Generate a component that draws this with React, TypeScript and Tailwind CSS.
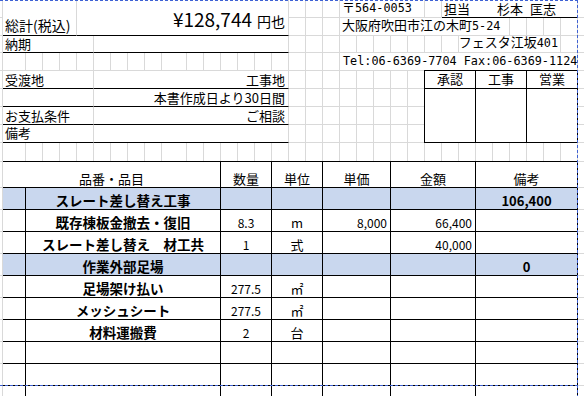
import React from 'react';

type Row = {
  band?: boolean;
  name?: string;
  qty?: string;
  unit?: string;
  price?: string;
  amount?: string;
  note?: string;
};

const rows: Row[] = [
  { band: true, name: 'スレート差し替え工事', note: '106,400' },
  { name: '既存棟板金撤去・復旧', qty: '8.3', unit: 'm', price: '8,000', amount: '66,400' },
  { name: 'スレート差し替え　材工共', qty: '1', unit: '式', amount: '40,000' },
  { band: true, name: '作業外部足場', note: '0' },
  { name: '足場架け払い', qty: '277.5', unit: '㎡' },
  { name: 'メッシュシート', qty: '277.5', unit: '㎡' },
  { name: '材料運搬費', qty: '2', unit: '台' },
  {},
  {},
  {},
];

const GC = 'h-full w-[17px] shrink-0 border-r border-b border-[#d9d9d9]';
const GCL = 'h-full w-[17px] shrink-0 border-r border-[#d9d9d9]';
const MONO = "font-['DejaVu_Sans_Mono',monospace] text-[11.8px]";

function Cells({ n, last = false }: { n: number; last?: boolean }) {
  return (
    <>
      {Array.from({ length: n }, (_, i) => (
        <div key={i} className={last ? GCL : GC} />
      ))}
    </>
  );
}

function Edge({ last = false }: { last?: boolean }) {
  return <div className={last ? 'h-full w-[6px] shrink-0' : 'h-full w-[6px] shrink-0 border-b border-[#d9d9d9]'} />;
}

function LeftGridRow({ last = false }: { last?: boolean }) {
  return (
    <div className="flex h-[18px]">
      <div className={last ? 'h-full w-[23px] shrink-0 border-r border-[#d9d9d9]' : 'h-full w-[23px] shrink-0 border-r border-b border-[#d9d9d9]'} />
      <Cells n={8} last={last} />
      <div className={last ? 'h-full w-[25px] shrink-0 border-r border-[#d9d9d9]' : 'h-full w-[25px] shrink-0 border-r border-b border-[#d9d9d9]'} />
      <Cells n={6} last={last} />
    </div>
  );
}

function LabelRow({ label, value, pb }: { label?: string; value?: string; pb?: boolean }) {
  return (
    <div className="flex h-[18px]">
      <div
        className={
          pb
            ? 'flex w-[91px] shrink-0 items-end border-r border-b border-r-[#d9d9d9] border-b-black pb-[3px] pl-[2px]'
            : 'flex w-[91px] shrink-0 items-end border-r border-b border-r-[#d9d9d9] border-b-black pb-[2px] pl-[2px]'
        }
      >
        <span className="text-[13px] leading-[13px]">{label}</span>
      </div>
      <div className="flex w-[195px] shrink-0 items-end justify-end border-r border-b border-r-[#d9d9d9] border-b-black pb-[2px] pr-[3px]">
        <span className="whitespace-nowrap text-[13px] leading-[13px]">{value}</span>
      </div>
    </div>
  );
}

function StubCol() {
  const h18 = 'h-[18px] w-[3px] border-r border-b border-[#d9d9d9]';
  const h17 = 'h-[17px] w-[3px] border-r border-b border-[#d9d9d9]';
  const hl = 'h-[18px] w-[3px] border-r border-[#d9d9d9]';
  return (
    <div className="flex w-[3px] shrink-0 flex-col">
      <div className={h18} />
      <div className={h18} />
      <div className={h17} />
      <div className={h18} />
      <div className={h18} />
      <div className={h18} />
      <div className={h18} />
      <div className={h18} />
      <div className={hl} />
    </div>
  );
}

function TableSide({ w6 = false }: { w6?: boolean }) {
  const head = w6
    ? 'h-[27px] w-[6px] border-t border-b border-[#d9d9d9]'
    : 'h-[27px] w-[3px] border-t border-r border-b border-[#d9d9d9]';
  const r = w6 ? 'h-[22px] w-[6px] border-b border-[#d9d9d9]' : 'h-[22px] w-[3px] border-r border-b border-[#d9d9d9]';
  return (
    <div className={w6 ? 'flex w-[6px] shrink-0 flex-col' : 'flex w-[3px] shrink-0 flex-col'}>
      <div className={head} />
      {rows.map((_, i) => (
        <div key={i} className={r} />
      ))}
    </div>
  );
}

export default function App() {
  return (
    <div className="relative h-[396px] w-[584px] overflow-hidden bg-white font-['Noto_Sans_CJK_JP',sans-serif] text-black">
      {/* top section */}
      <div className="flex h-[161px]">
        <StubCol />
        {/* left block */}
        <div className="flex w-[286px] shrink-0 flex-col">
          <div className="flex h-[36px]">
            <div className="flex w-[74px] shrink-0 items-end border-r border-b border-r-[#d9d9d9] border-b-black pb-[3px] pl-[2px]">
              <span className="whitespace-nowrap text-[14px] leading-[14px]">総計(税込)</span>
            </div>
            <div className="flex w-[212px] shrink-0 items-end justify-end border-r border-b border-r-[#d9d9d9] border-b-black pb-[4px] pr-[3px]">
              <div className="whitespace-nowrap text-[19px] leading-[19px]">
                <span>¥128,744</span>
                <span className="ml-[5px] text-[14px]">円也</span>
              </div>
            </div>
          </div>
          <div className="flex h-[17px]">
            <div className="flex w-[91px] shrink-0 items-end border-r border-b border-r-[#d9d9d9] border-b-black pb-[2px] pl-[2px]">
              <span className="text-[13px] leading-[13px]">納期</span>
            </div>
            <div className="w-[195px] shrink-0 border-r border-b border-r-[#d9d9d9] border-b-black" />
          </div>
          <LeftGridRow />
          <LabelRow label="受渡地" value="工事地" />
          <LabelRow value="本書作成日より30日間" />
          <LabelRow label="お支払条件" value="ご相談" />
          <LabelRow label="備考" pb />
          <LeftGridRow last />
        </div>

        {/* right block */}
        <div className="flex w-[295px] shrink-0 flex-col">
          {/* R1 */}
          <div className="flex h-[18px]">
            <Cells n={3} />
            <div className="flex w-[85px] shrink-0 items-end border-r border-b border-[#d9d9d9] pb-[2px] pl-[2px]">
              <span className="whitespace-nowrap text-[13px] leading-[13px]">
                〒<span className={MONO}>564-0053</span>
              </span>
            </div>
            <Cells n={1} />
            <div className="flex w-[34px] shrink-0 items-end border-b border-black pb-[2px] pl-[2px]">
              <span className="whitespace-nowrap text-[13px] leading-[13px]">担当</span>
            </div>
            <div className="flex w-[102px] shrink-0 items-end justify-center border-r border-b border-r-[#d9d9d9] border-b-black pb-[2px]">
              <span className="whitespace-nowrap text-[13px] leading-[13px]">
                杉本<span className="ml-[7px]">匡志</span>
              </span>
            </div>
            <Edge />
          </div>
          {/* R2 */}
          <div className="flex h-[18px]">
            <Cells n={3} />
            <div className="flex w-[170px] shrink-0 items-end border-r border-b border-[#d9d9d9] pb-[2px] pl-[2px]">
              <span className="whitespace-nowrap text-[13px] leading-[13px]">
                大阪府吹田市江の木町<span className={MONO}>5-24</span>
              </span>
            </div>
            <Cells n={4} />
            <Edge />
          </div>
          {/* R3 */}
          <div className="flex h-[17px]">
            <Cells n={10} />
            <div className="flex w-[102px] shrink-0 items-end justify-end border-r border-b border-[#d9d9d9] pb-[2px] pr-[2px]">
              <span className="whitespace-nowrap text-[13px] leading-[13px]">
                フェスタ江坂<span className={MONO}>401</span>
              </span>
            </div>
            <Cells n={1} />
            <Edge />
          </div>
          {/* R4 */}
          <div className="flex h-[18px]">
            <Cells n={3} />
            <div className="flex w-[238px] shrink-0 items-end border-r border-b border-[#d9d9d9] pb-[2px] pl-[3px]">
              <span className={'whitespace-nowrap leading-[13px] ' + MONO}>Tel:06-6369-7704 Fax:06-6369-1124</span>
            </div>
            <Edge />
          </div>
          {/* R5-R8 with approval box */}
          <div className="flex h-[72px] items-start">
            <div className="flex w-[135px] shrink-0 flex-col">
              {[0, 1, 2, 3].map((i) => (
                <div key={i} className="flex h-[18px]">
                  <Cells n={7} />
                  <div className="h-full w-[16px] shrink-0 border-b border-[#d9d9d9]" />
                </div>
              ))}
            </div>
            <div className="-mt-px flex h-[73px] w-[154px] shrink-0 flex-col border-t border-l border-black">
              <div className="flex h-[18px]">
                {['承認', '工事', '営業'].map((t) => (
                  <div key={t} className="flex w-[51px] shrink-0 items-end justify-center border-r border-b border-black pb-[3px]">
                    <span className="text-[13px] leading-[13px]">{t}</span>
                  </div>
                ))}
              </div>
              <div className="flex h-[54px]">
                {[0, 1, 2].map((i) => (
                  <div key={i} className="w-[51px] shrink-0 border-r border-b border-black" />
                ))}
              </div>
            </div>
            <div className="flex w-[6px] shrink-0 flex-col">
              {[0, 1, 2, 3].map((i) => (
                <div key={i} className="h-[18px] w-[6px] border-b border-[#d9d9d9]" />
              ))}
            </div>
          </div>
          {/* R9 */}
          <div className="flex h-[18px]">
            <Cells n={17} last />
            <Edge last />
          </div>
        </div>
      </div>

      {/* table section */}
      <div className="flex">
        <TableSide />
        <div className="flex w-[575px] shrink-0 flex-col border-t border-black">
          <div className="flex h-[26px]">
            {[
              ['品番・品目', 'w-[218px]'],
              ['数量', 'w-[51px]'],
              ['単位', 'w-[51px]'],
              ['単価', 'w-[68px]'],
              ['金額', 'w-[85px]'],
              ['備考', 'w-[102px]'],
            ].map(([t, w]) => (
              <div key={t} className={'flex shrink-0 items-end justify-center border-r border-b border-black pb-[2px] ' + w}>
                <span className="text-[13px] leading-[13px]">{t}</span>
              </div>
            ))}
          </div>
          {rows.map((r, i) => (
            <div key={i} className={r.band ? 'flex h-[22px] bg-[#c9d7ee]' : 'flex h-[22px]'}>
              <div className="w-[23px] shrink-0 border-r border-b border-black" />
              <div className="flex w-[195px] shrink-0 items-end justify-center border-r border-b border-black pb-[2px]">
                <span className="whitespace-nowrap text-[13.5px] font-bold leading-[13px]">{r.name}</span>
              </div>
              <div className="flex w-[51px] shrink-0 items-end justify-center border-r border-b border-black pb-[2px]">
                <span className="text-[12px] leading-[12px]">{r.qty}</span>
              </div>
              <div className="flex w-[51px] shrink-0 items-end justify-center border-r border-b border-black pb-[2px]">
                <span className="text-[13px] leading-[13px]">{r.unit}</span>
              </div>
              <div className="flex w-[68px] shrink-0 items-end justify-end border-r border-b border-black pb-[2px] pr-[3px]">
                <span className="text-[12px] leading-[12px]">{r.price}</span>
              </div>
              <div className="flex w-[85px] shrink-0 items-end justify-end border-r border-b border-black pb-[2px] pr-[3px]">
                <span className="text-[12px] leading-[12px]">{r.amount}</span>
              </div>
              <div className="flex w-[102px] shrink-0 items-end justify-center border-r border-b border-black pb-[2px]">
                <span className="text-[13px] font-bold leading-[13px]">{r.note}</span>
              </div>
            </div>
          ))}
        </div>
        <TableSide w6 />
      </div>

      {/* page break overlays */}
      <div className="absolute top-0 left-0 h-px w-[578px] bg-[repeating-linear-gradient(to_right,#3f62d4_0px,#3f62d4_3px,transparent_3px,transparent_5px)]" />
      <div className="absolute top-[385px] left-0 h-px w-[578px] bg-[repeating-linear-gradient(to_right,#3f62d4_0px,#3f62d4_3px,transparent_3px,transparent_5px)]" />
      <div className="absolute top-0 left-[577px] h-[396px] w-px bg-[repeating-linear-gradient(to_bottom,#3f62d4_0px,#3f62d4_3px,transparent_3px,transparent_5px)]" />
    </div>
  );
}
